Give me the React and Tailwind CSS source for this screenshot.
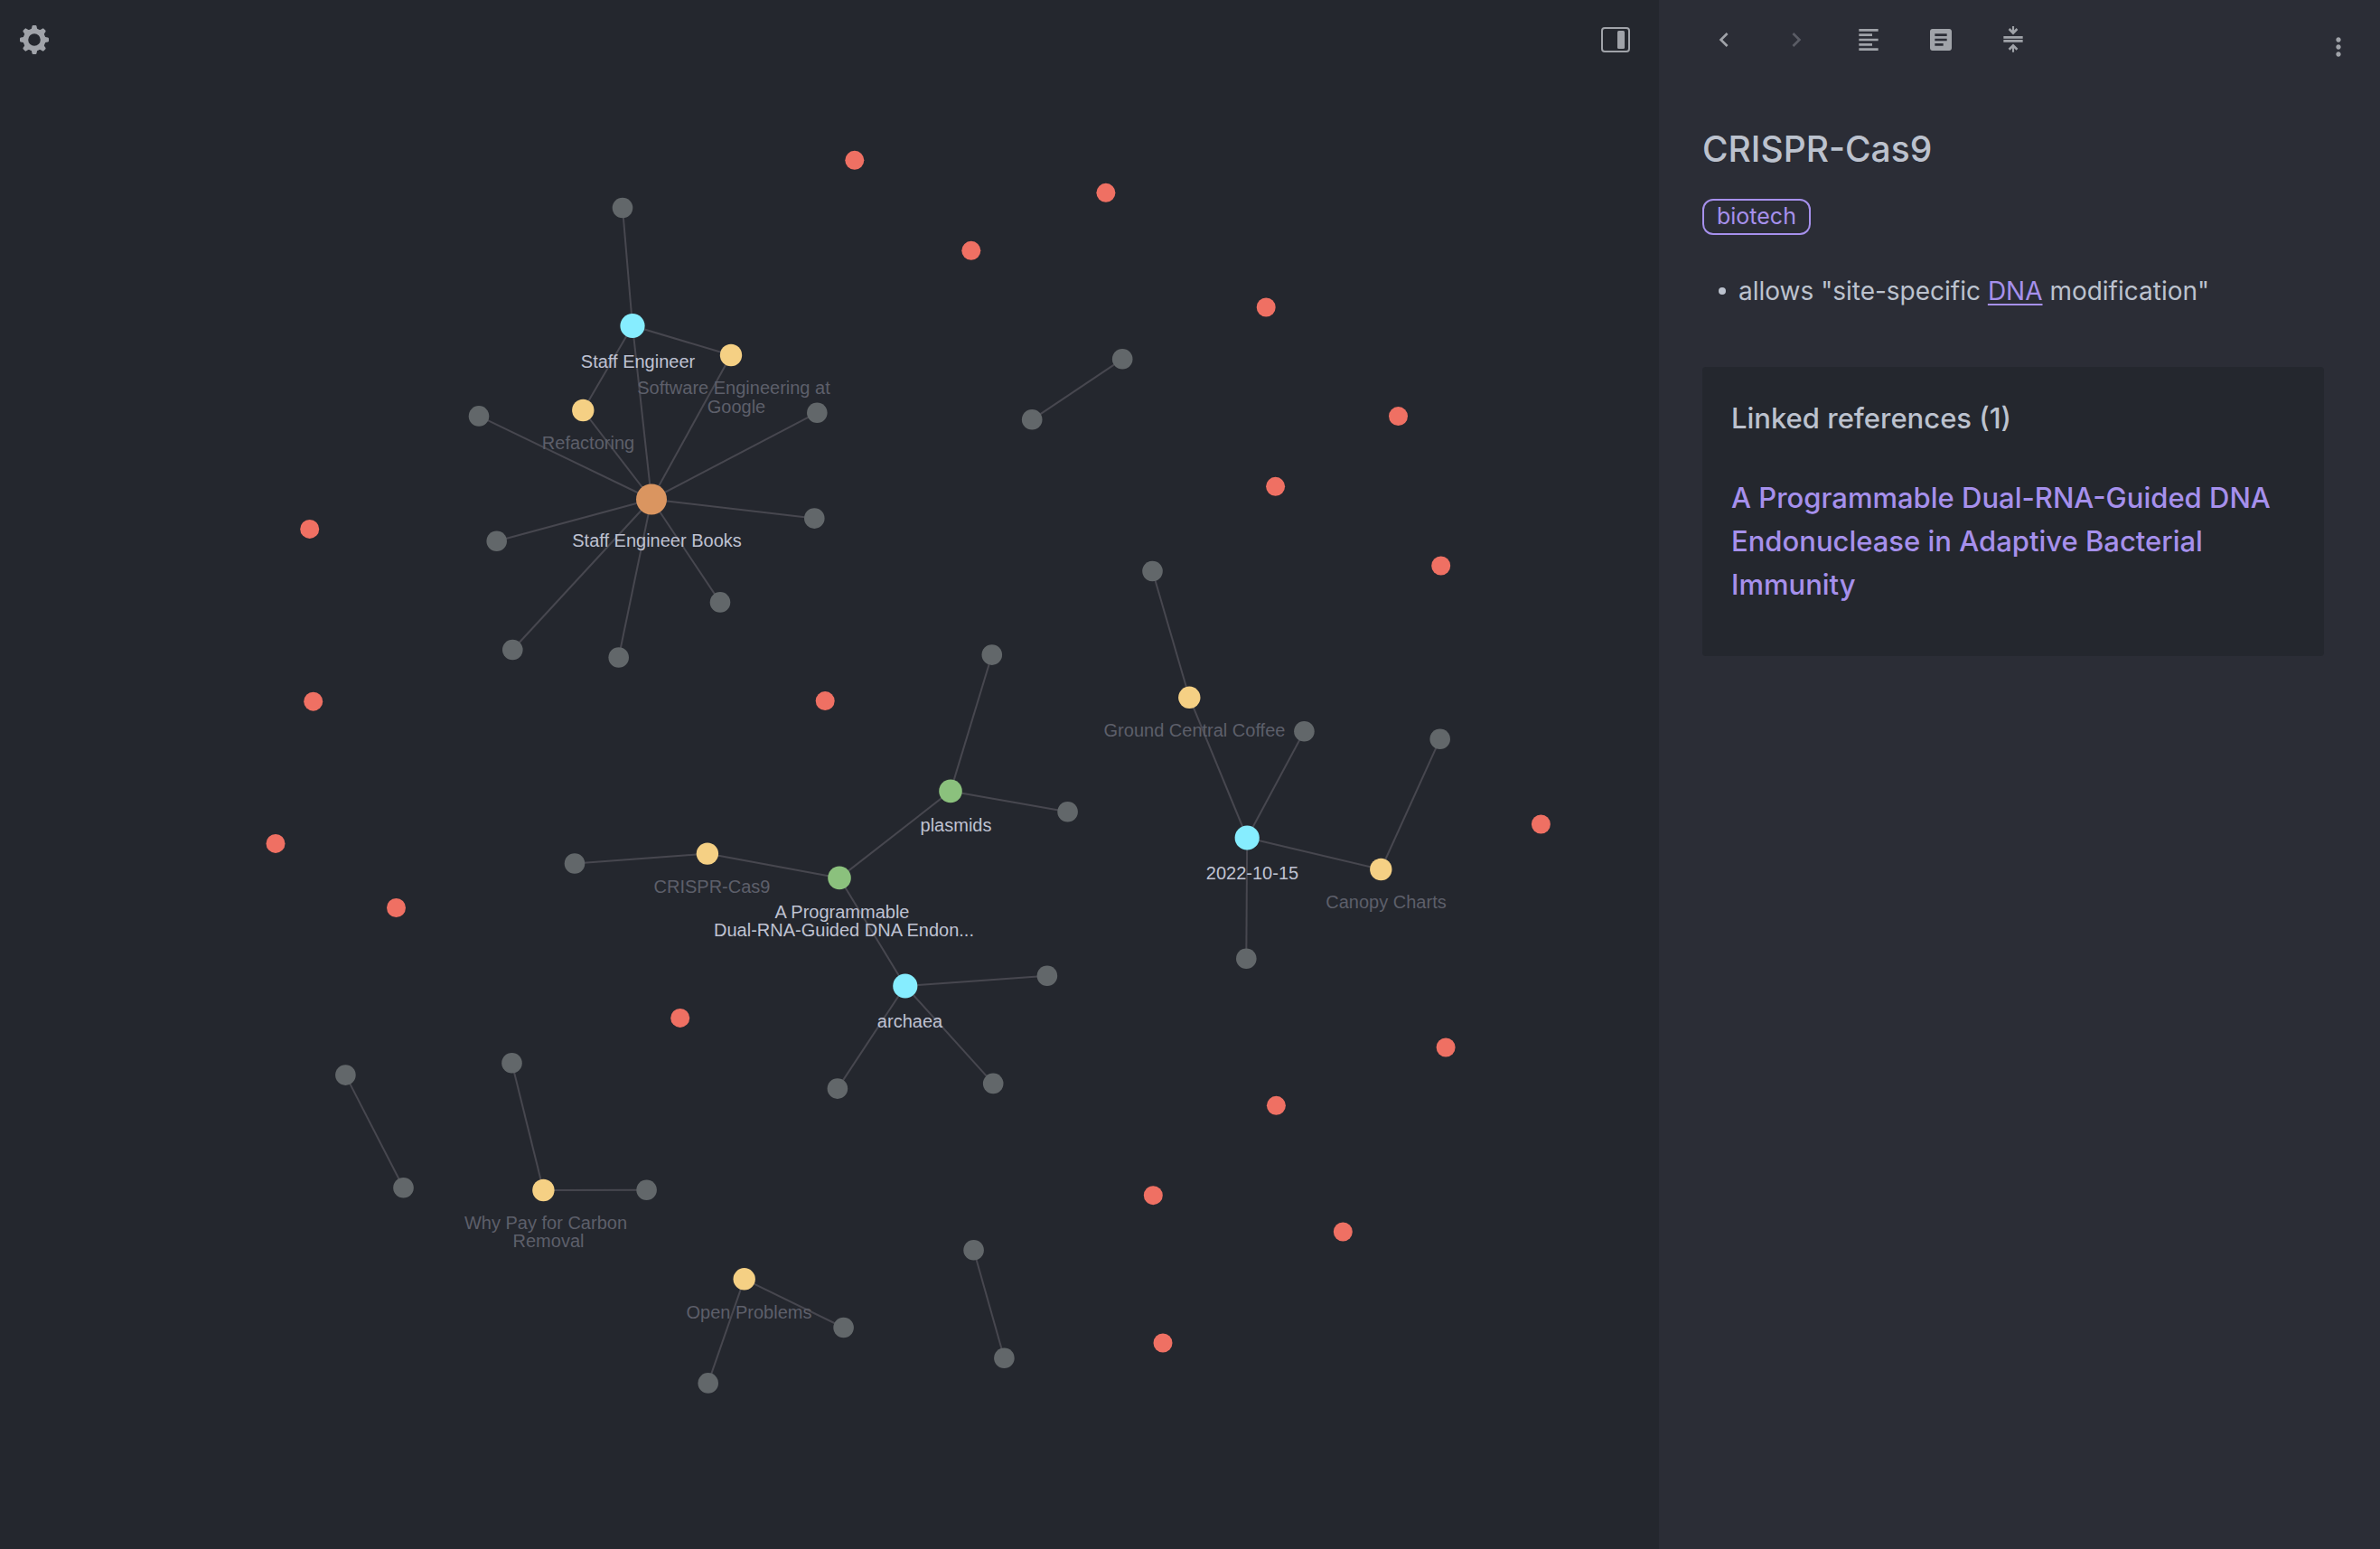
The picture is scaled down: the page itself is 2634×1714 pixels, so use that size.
import React from "react";
import { MdArticle, MdChevronLeft, MdChevronRight, MdMoreVert } from "react-icons/md";

const KINDS = {
  orphan: { fill: "#ef7063", r: 10.5 },
  leaf: { fill: "#62676a", r: 11.3 },
  yellow: { fill: "#f5d084", r: 12.2 },
  green: { fill: "#8bc17d", r: 12.8 },
  cyan: { fill: "#86edff", r: 13.6 },
  orange: { fill: "#da9560", r: 17 },
};

/* id, kind, x, y */
const NODES = [
  ["s1", "leaf", 689, 230],
  ["staff", "cyan", 700, 360.5],
  ["google", "yellow", 809, 393],
  ["refactoring", "yellow", 645.3, 454],
  ["s2", "leaf", 530, 460.4],
  ["s3", "leaf", 904.3, 456.7],
  ["books", "orange", 721, 552.5],
  ["s4", "leaf", 549.7, 598.7],
  ["s5", "leaf", 901.3, 573.6],
  ["s6", "leaf", 797, 666.4],
  ["s7", "leaf", 567.3, 719],
  ["s8", "leaf", 684.7, 727.5],
  ["p1", "leaf", 1097.8, 724.6],
  ["plasmids", "green", 1052, 875.4],
  ["p2", "leaf", 1181.6, 898.2],
  ["crispr", "yellow", 782.9, 944.6],
  ["c1", "leaf", 636, 955.5],
  ["paper", "green", 929, 971.4],
  ["archaea", "cyan", 1001.8, 1091],
  ["a1", "leaf", 1158.9, 1079.8],
  ["a2", "leaf", 926.9, 1204.6],
  ["a3", "leaf", 1099.2, 1198.9],
  ["g1", "leaf", 1275.5, 632],
  ["coffee", "yellow", 1316.3, 771.8],
  ["g2", "leaf", 1443.4, 809.3],
  ["g3", "leaf", 1593.7, 817.8],
  ["day", "cyan", 1380.2, 927],
  ["canopy", "yellow", 1528.3, 962],
  ["g4", "leaf", 1379.3, 1060.7],
  ["b1", "leaf", 382.4, 1189.6],
  ["b2", "leaf", 446.5, 1314.3],
  ["w1", "leaf", 566.5, 1176.3],
  ["carbon", "yellow", 601.4, 1317],
  ["w2", "leaf", 715.6, 1316.8],
  ["open", "yellow", 823.7, 1415.3],
  ["o1", "leaf", 933.6, 1469],
  ["o2", "leaf", 783.7, 1530.4],
  ["d1", "leaf", 1077.6, 1383.3],
  ["d2", "leaf", 1111.4, 1502.7],
  ["e1", "leaf", 1242.2, 397.3],
  ["e2", "leaf", 1142.2, 464.3],
  ["r1", "orphan", 945.8, 177.3],
  ["r2", "orphan", 1223.9, 213.3],
  ["r3", "orphan", 1074.8, 277.3],
  ["r4", "orphan", 1401.2, 340],
  ["r5", "orphan", 1547.5, 460.6],
  ["r6", "orphan", 1411.6, 538.3],
  ["r7", "orphan", 1594.7, 626],
  ["r8", "orphan", 1705.4, 912],
  ["r9", "orphan", 1600.1, 1159],
  ["r10", "orphan", 1412.4, 1223.3],
  ["r11", "orphan", 1276.3, 1322.7],
  ["r12", "orphan", 1486.3, 1363],
  ["r13", "orphan", 1287, 1486],
  ["r14", "orphan", 913.2, 775.6],
  ["r15", "orphan", 752.7, 1126.4],
  ["r16", "orphan", 342.7, 585.4],
  ["r17", "orphan", 346.7, 776.2],
  ["r18", "orphan", 305, 933.4],
  ["r19", "orphan", 438.5, 1004.5],
];

const EDGES = [
  ["s1", "staff"], ["staff", "google"], ["staff", "refactoring"], ["staff", "books"],
  ["google", "books"], ["refactoring", "books"], ["s2", "books"], ["s3", "books"],
  ["s4", "books"], ["s5", "books"], ["s6", "books"], ["s7", "books"], ["s8", "books"],
  ["p1", "plasmids"], ["p2", "plasmids"], ["plasmids", "paper"], ["crispr", "paper"],
  ["c1", "crispr"], ["paper", "archaea"], ["a1", "archaea"], ["a2", "archaea"], ["a3", "archaea"],
  ["g1", "coffee"], ["coffee", "day"], ["g2", "day"], ["day", "canopy"], ["g3", "canopy"], ["g4", "day"],
  ["b1", "b2"], ["w1", "carbon"], ["carbon", "w2"], ["open", "o1"], ["open", "o2"],
  ["d1", "d2"], ["e1", "e2"],
];

const BRIGHT = "#bfc2d2";
const DIM = "#5d5f6a";

/* text, centre x, baseline y, colour */
const LABELS = [
  ["Staff Engineer", 706, 407, BRIGHT],
  ["Software Engineering at", 812, 436, DIM],
  ["Google", 815, 457, DIM],
  ["Refactoring", 651, 497, DIM],
  ["Staff Engineer Books", 727, 605, BRIGHT],
  ["plasmids", 1058, 920, BRIGHT],
  ["CRISPR-Cas9", 788, 988, DIM],
  ["A Programmable", 932, 1016, BRIGHT],
  ["Dual-RNA-Guided DNA Endon...", 934, 1036, BRIGHT],
  ["archaea", 1007, 1137, BRIGHT],
  ["Ground Central Coffee", 1322, 815, DIM],
  ["2022-10-15", 1386, 973, BRIGHT],
  ["Canopy Charts", 1534, 1005, DIM],
  ["Why Pay for Carbon", 604, 1360, DIM],
  ["Removal", 607, 1380, DIM],
  ["Open Problems", 829, 1459, DIM],
];

const byId = Object.fromEntries(NODES.map((n) => [n[0], n]));

function Graph() {
  return (
    <svg
      viewBox="0 0 1836 1714"
      className="block h-full w-full"
      role="img"
      aria-label="Note graph"
    >
      <g stroke="#47474f" strokeWidth="2">
        {EDGES.map(([a, b]) => (
          <line
            key={a + b}
            x1={byId[a][2]}
            y1={byId[a][3]}
            x2={byId[b][2]}
            y2={byId[b][3]}
          />
        ))}
      </g>
      {NODES.map(([id, kind, x, y]) => (
        <circle key={id} cx={x} cy={y} r={KINDS[kind].r} fill={KINDS[kind].fill} />
      ))}
      <g textAnchor="middle" className="font-['Liberation_Sans',Arial,sans-serif] text-[20px]">
        {LABELS.map(([text, x, y, fill]) => (
          <text key={text} x={x} y={y} fill={fill}>
            {text}
          </text>
        ))}
      </g>
    </svg>
  );
}

const TEETH = [0, 45, 90, 135, 180, 225, 270, 315];

function GearIcon() {
  return (
    <svg viewBox="0 0 32 32" className="size-8" aria-hidden="true">
      <circle cx="16" cy="16" r="9.6" fill="none" stroke="currentColor" strokeWidth="5.6" />
      {TEETH.map((a) => (
        <path
          key={a}
          d="M10.8 5.6 L12.4 4.4 Q13 3.8 13.2 2.6 L13.5 1 Q13.7 0 14.7 0 H17.3 Q18.3 0 18.5 1 L18.8 2.6 Q19 3.8 19.6 4.4 L21.2 5.6 Z"
          fill="currentColor"
          transform={`rotate(${a} 16 16)`}
        />
      ))}
    </svg>
  );
}

function SidebarIcon() {
  return (
    <svg viewBox="0 0 32 32" className="size-8" aria-hidden="true">
      <rect x="1" y="3" width="30" height="26" rx="3" fill="none" stroke="currentColor" strokeWidth="2" />
      <rect x="18" y="6" width="8" height="20" rx="1.5" fill="currentColor" />
    </svg>
  );
}

function LinesIcon() {
  return (
    <svg viewBox="0 0 24 24" className="size-8" fill="currentColor" aria-hidden="true">
      <path d="M4 3h16v2H4zM4 7h11v2H4zM4 11h16v2H4zM4 15h11v2H4zM4 19h16v2H4z" />
    </svg>
  );
}

function CollapseIcon() {
  return (
    <svg viewBox="0 0 24 24" className="size-8" fill="currentColor" aria-hidden="true">
      <path d="M4 9h16v2H4zM4 12h16v2H4z" />
      <path d="M11.2 0.8h1.6v3.4l1.9-1.9L16 3.8l-4 4-4-4 1.3-1.5 1.9 1.9z" />
      <path d="M11.2 22.3h1.6v-3.4l1.9 1.9 1.3-1.5-4-4-4 4 1.3 1.5 1.9-1.9z" />
    </svg>
  );
}

function IconButton({ label, disabled = false, children }) {
  return (
    <button
      type="button"
      aria-label={label}
      disabled={disabled}
      className="flex size-12 items-center justify-center rounded text-[#a0a3a9] disabled:text-[#5a5c65]"
    >
      {children}
    </button>
  );
}

export default function App() {
  return (
    <div className="flex min-h-screen bg-[#24272e] font-['Inter',sans-serif] text-[#bcc2ce]">
      <main className="relative h-screen min-w-0 flex-1">
        <Graph />
        <div className="absolute inset-x-0 top-0 flex justify-between px-[14px] pt-5">
          <IconButton label="Settings">
            <GearIcon />
          </IconButton>
          <div className="mr-[10px]">
            <IconButton label="Toggle sidebar">
              <SidebarIcon />
            </IconButton>
          </div>
        </div>
      </main>

      <aside className="w-[798px] shrink-0 bg-[#2b2d36]">
        <header className="flex items-start justify-between pt-5 pr-[22px] pl-12">
          <nav className="flex gap-8" aria-label="Note tools">
            <IconButton label="Back">
              <MdChevronLeft size={32} />
            </IconButton>
            <IconButton label="Forward" disabled>
              <MdChevronRight size={32} />
            </IconButton>
            <IconButton label="Outline">
              <LinesIcon />
            </IconButton>
            <IconButton label="Document view">
              <MdArticle size={32} />
            </IconButton>
            <IconButton label="Collapse">
              <CollapseIcon />
            </IconButton>
          </nav>
          <div className="pt-2">
            <IconButton label="More">
              <MdMoreVert size={32} />
            </IconButton>
          </div>
        </header>

        <article className="pt-[61px] pr-[62px] pl-12">
          <h1 className="text-[39px] leading-[56px] font-medium">CRISPR-Cas9</h1>
          <div className="mt-[27px] flex">
            <a
              href="#biotech"
              className="flex h-10 items-center rounded-xl border-2 border-[#a690ec] px-[14px] text-[25px] text-[#a690ec]"
            >
              biotech
            </a>
          </div>
          <ul className="mt-[38px]">
            <li className="flex items-center text-[28px] leading-[48px]">
              <span className="mr-[14px] ml-[18px] size-2 rounded-full bg-[#bcc2ce]" />
              <p>
                allows "site-specific{" "}
                <a href="#dna" className="text-[#a690ec] underline decoration-2 underline-offset-4">
                  DNA
                </a>{" "}
                modification"
              </p>
            </li>
          </ul>

          <section className="mt-[60px] rounded bg-[#24272e] px-8 pt-[33px] pb-[55px]">
            <h2 className="text-[31px] leading-[48px] font-medium">Linked references (1)</h2>
            <a
              href="#paper"
              className="mt-10 block text-[31px] leading-[48px] font-medium text-[#a690ec]"
            >
              A Programmable Dual-RNA-Guided DNA Endonuclease in Adaptive Bacterial Immunity
            </a>
          </section>
        </article>
      </aside>
    </div>
  );
}
